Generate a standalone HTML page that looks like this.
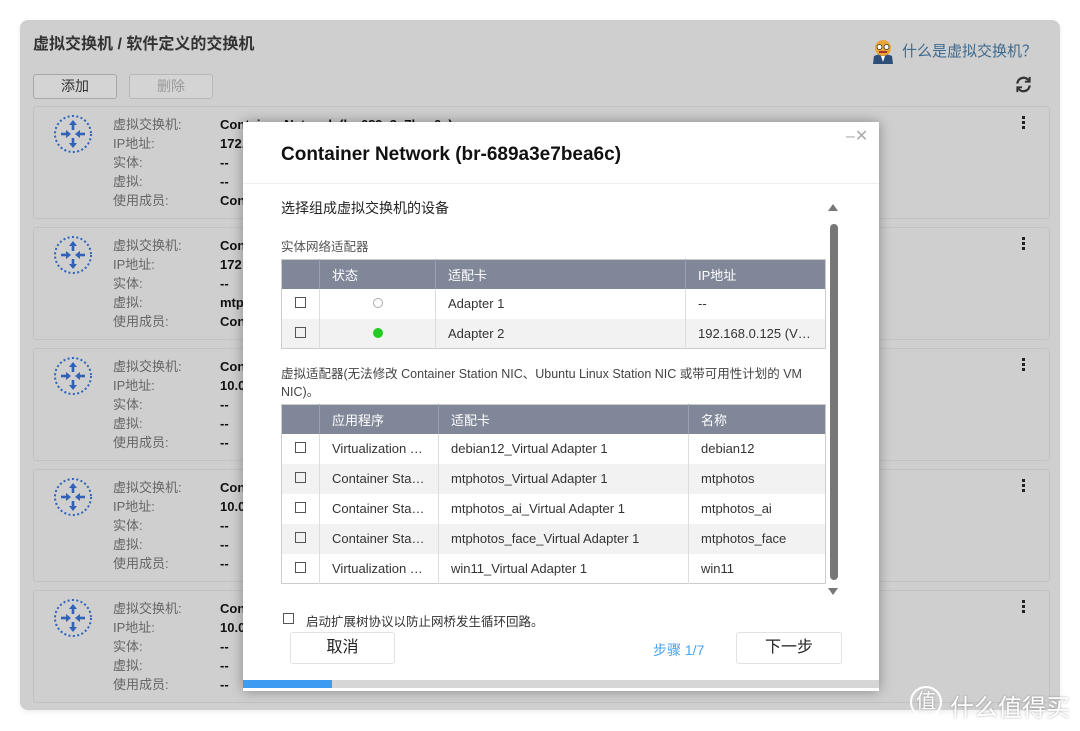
<!DOCTYPE html>
<html><head><meta charset="utf-8"><style>
*{box-sizing:border-box;margin:0;padding:0}
body{width:1080px;height:731px;background:#fff;font-family:"Liberation Sans","Noto Sans CJK SC",sans-serif;position:relative;overflow:hidden;color:#333}
.abs{position:absolute}
.panel{left:20px;top:20px;width:1040px;height:690px;background:#cfcfcf;border-radius:8px;box-shadow:0 2px 6px rgba(0,0,0,.08)}
.btn{position:absolute;height:25px;border:1px solid #a8a8a8;border-radius:3px;background:#d4d4d4;font-size:14px;text-align:center;line-height:23px}
.card{position:absolute;left:33px;width:1017px;height:113px;border:1px solid #c2c2c2;border-radius:3px;background:#cfcfcf}
.lbl{position:absolute;left:80px;font-size:13px;color:#666;line-height:19px}
.val{position:absolute;left:187px;font-size:13px;color:#111;font-weight:bold;line-height:19px}
.kebab{position:absolute;left:989px;top:10px;width:4px}
.kebab i{display:block;width:3px;height:3px;background:#222;margin-bottom:2px}
.modal{left:243px;top:122px;width:636px;height:569px;background:#fff;box-shadow:0 0 12px rgba(0,0,0,.35)}
table{border-collapse:collapse;position:absolute;left:38px;width:545px;font-size:13px;table-layout:fixed}
th{background:#7f8799;color:#fff;font-weight:normal;text-align:left;height:29px;padding-left:12px;border-left:1px solid #9aa1b0}
th:first-child{border-left:none}
td{height:30px;padding-left:12px;border-left:1px solid #ddd;color:#333;white-space:nowrap;overflow:hidden}
table{border:1px solid #ccc}
.cb{display:inline-block;width:11px;height:11px;border:1px solid #555;margin-left:1px}
td:first-child{padding-left:12px;border-left:none}
</style></head><body>
<div class="abs panel"></div>
<div class="abs" style="left:33px;top:30px;font-size:16px;color:#333;font-weight:bold">虚拟交换机 / 软件定义的交换机</div>
<div class="btn" style="left:33px;top:74px;width:84px">添加</div>
<div class="btn" style="left:129px;top:74px;width:84px;color:#999;border-color:#b8b8b8">删除</div>
<svg class="abs" style="left:870px;top:38px" width="26" height="26" viewBox="0 0 26 26"><path d="M3 26 L4 18 Q13 14 22 18 L23 26Z" fill="#2d4e78"/><path d="M11 18 L13 24 L15 18Z" fill="#fff"/><circle cx="13" cy="10" r="8" fill="#e8a636"/><circle cx="9.5" cy="9" r="2.5" fill="#fff" stroke="#333" stroke-width=".8"/><circle cx="16.5" cy="9" r="2.5" fill="#fff" stroke="#333" stroke-width=".8"/><rect x="9" y="13" width="8" height="2" fill="#a33"/></svg>
<div class="abs" style="left:902px;top:40px;font-size:15px;color:#3e6a8e">什么是虚拟交换机？</div>
<svg class="abs" style="left:1014px;top:75px" width="19" height="19" viewBox="0 0 20 20" fill="none" stroke="#333" stroke-width="2.4"><path d="M3.5 9 A6.5 6.5 0 0 1 15.5 6"/><path d="M16.5 11 A6.5 6.5 0 0 1 4.5 14"/><path d="M16.5 2 V7 H11.5" stroke-width="2"/><path d="M3.5 18 V13 H8.5" stroke-width="2"/></svg>

<div class="card" style="top:106px"></div>
<div class="card" style="top:227px"></div>
<div class="card" style="top:348px"></div>
<div class="card" style="top:469px"></div>
<div class="card" style="top:590px"></div>

<div style="position:absolute;left:33px;top:106px;width:1017px;height:113px">
<svg style="position:absolute;left:20px;top:8px" width="40" height="40" viewBox="0 0 40 40"><circle cx="20" cy="20" r="18" fill="none" stroke="#2f62b8" stroke-width="2" stroke-dasharray="2 2.4"/><g stroke="#2f62b8" stroke-width="2.6"><path d="M20 16 V10"/><path d="M20 24 V30"/><path d="M8 20 H15"/><path d="M32 20 H25"/></g><g fill="#2f62b8"><path d="M20 6 L24 11 H16Z"/><path d="M20 34 L24 29 H16Z"/><path d="M18 20 L13 16 V24Z"/><path d="M22 20 L27 16 V24Z"/></g></svg>
<div class="lbl" style="top:9px">虚拟交换机:</div><div class="lbl" style="top:28px">IP地址:</div><div class="lbl" style="top:47px">实体:</div><div class="lbl" style="top:66px">虚拟:</div><div class="lbl" style="top:85px">使用成员:</div>
<div class="val" style="top:9px">Container Network (br-689a3e7bea6c)</div><div class="val" style="top:28px">172.</div><div class="val" style="top:47px">--</div><div class="val" style="top:66px">--</div><div class="val" style="top:85px">Con</div>
<div class="kebab"><i></i><i></i><i></i></div></div>

<div style="position:absolute;left:33px;top:227px;width:1017px;height:113px">
<svg style="position:absolute;left:20px;top:8px" width="40" height="40" viewBox="0 0 40 40"><circle cx="20" cy="20" r="18" fill="none" stroke="#2f62b8" stroke-width="2" stroke-dasharray="2 2.4"/><g stroke="#2f62b8" stroke-width="2.6"><path d="M20 16 V10"/><path d="M20 24 V30"/><path d="M8 20 H15"/><path d="M32 20 H25"/></g><g fill="#2f62b8"><path d="M20 6 L24 11 H16Z"/><path d="M20 34 L24 29 H16Z"/><path d="M18 20 L13 16 V24Z"/><path d="M22 20 L27 16 V24Z"/></g></svg>
<div class="lbl" style="top:9px">虚拟交换机:</div><div class="lbl" style="top:28px">IP地址:</div><div class="lbl" style="top:47px">实体:</div><div class="lbl" style="top:66px">虚拟:</div><div class="lbl" style="top:85px">使用成员:</div>
<div class="val" style="top:9px">Con</div><div class="val" style="top:28px">172</div><div class="val" style="top:47px">--</div><div class="val" style="top:66px">mtp</div><div class="val" style="top:85px">Con</div>
<div class="kebab"><i></i><i></i><i></i></div></div>

<div style="position:absolute;left:33px;top:348px;width:1017px;height:113px">
<svg style="position:absolute;left:20px;top:8px" width="40" height="40" viewBox="0 0 40 40"><circle cx="20" cy="20" r="18" fill="none" stroke="#2f62b8" stroke-width="2" stroke-dasharray="2 2.4"/><g stroke="#2f62b8" stroke-width="2.6"><path d="M20 16 V10"/><path d="M20 24 V30"/><path d="M8 20 H15"/><path d="M32 20 H25"/></g><g fill="#2f62b8"><path d="M20 6 L24 11 H16Z"/><path d="M20 34 L24 29 H16Z"/><path d="M18 20 L13 16 V24Z"/><path d="M22 20 L27 16 V24Z"/></g></svg>
<div class="lbl" style="top:9px">虚拟交换机:</div><div class="lbl" style="top:28px">IP地址:</div><div class="lbl" style="top:47px">实体:</div><div class="lbl" style="top:66px">虚拟:</div><div class="lbl" style="top:85px">使用成员:</div>
<div class="val" style="top:9px">Con</div><div class="val" style="top:28px">10.0</div><div class="val" style="top:47px">--</div><div class="val" style="top:66px">--</div><div class="val" style="top:85px">--</div>
<div class="kebab"><i></i><i></i><i></i></div></div>

<div style="position:absolute;left:33px;top:469px;width:1017px;height:113px">
<svg style="position:absolute;left:20px;top:8px" width="40" height="40" viewBox="0 0 40 40"><circle cx="20" cy="20" r="18" fill="none" stroke="#2f62b8" stroke-width="2" stroke-dasharray="2 2.4"/><g stroke="#2f62b8" stroke-width="2.6"><path d="M20 16 V10"/><path d="M20 24 V30"/><path d="M8 20 H15"/><path d="M32 20 H25"/></g><g fill="#2f62b8"><path d="M20 6 L24 11 H16Z"/><path d="M20 34 L24 29 H16Z"/><path d="M18 20 L13 16 V24Z"/><path d="M22 20 L27 16 V24Z"/></g></svg>
<div class="lbl" style="top:9px">虚拟交换机:</div><div class="lbl" style="top:28px">IP地址:</div><div class="lbl" style="top:47px">实体:</div><div class="lbl" style="top:66px">虚拟:</div><div class="lbl" style="top:85px">使用成员:</div>
<div class="val" style="top:9px">Con</div><div class="val" style="top:28px">10.0</div><div class="val" style="top:47px">--</div><div class="val" style="top:66px">--</div><div class="val" style="top:85px">--</div>
<div class="kebab"><i></i><i></i><i></i></div></div>

<div style="position:absolute;left:33px;top:590px;width:1017px;height:113px">
<svg style="position:absolute;left:20px;top:8px" width="40" height="40" viewBox="0 0 40 40"><circle cx="20" cy="20" r="18" fill="none" stroke="#2f62b8" stroke-width="2" stroke-dasharray="2 2.4"/><g stroke="#2f62b8" stroke-width="2.6"><path d="M20 16 V10"/><path d="M20 24 V30"/><path d="M8 20 H15"/><path d="M32 20 H25"/></g><g fill="#2f62b8"><path d="M20 6 L24 11 H16Z"/><path d="M20 34 L24 29 H16Z"/><path d="M18 20 L13 16 V24Z"/><path d="M22 20 L27 16 V24Z"/></g></svg>
<div class="lbl" style="top:9px">虚拟交换机:</div><div class="lbl" style="top:28px">IP地址:</div><div class="lbl" style="top:47px">实体:</div><div class="lbl" style="top:66px">虚拟:</div><div class="lbl" style="top:85px">使用成员:</div>
<div class="val" style="top:9px">Con</div><div class="val" style="top:28px">10.0</div><div class="val" style="top:47px">--</div><div class="val" style="top:66px">--</div><div class="val" style="top:85px">--</div>
<div class="kebab"><i></i><i></i><i></i></div></div>

<div class="abs modal">
  <div class="abs" style="left:603px;top:4px;font-size:16px;color:#aaa">–✕</div>
  <div class="abs" style="left:38px;top:22px;font-size:19px;font-weight:bold;color:#111">Container Network (br-689a3e7bea6c)</div>
  <div class="abs" style="left:0;top:61px;width:636px;height:1px;background:#eee"></div>
  <div class="abs" style="left:38px;top:76px;font-size:14px;color:#222">选择组成虚拟交换机的设备</div>
  <div class="abs" style="left:585px;top:82px;width:0;height:0;border-left:5px solid transparent;border-right:5px solid transparent;border-bottom:7px solid #777"></div>
  <div class="abs" style="left:587px;top:102px;width:8px;height:356px;background:#777;border-radius:4px"></div>
  <div class="abs" style="left:585px;top:466px;width:0;height:0;border-left:5px solid transparent;border-right:5px solid transparent;border-top:7px solid #777"></div>
  <div class="abs" style="left:38px;top:114px;font-size:12.5px;color:#555">实体网络适配器</div>
  <table style="top:137px">
    <colgroup><col style="width:38px"><col style="width:116px"><col style="width:250px"><col></colgroup>
    <tr><th></th><th>状态</th><th>适配卡</th><th>IP地址</th></tr>
    <tr><td style="background:#fff"><span class="cb"></span></td><td style="background:#fff;text-align:center;padding:0"><span style="display:inline-block;width:10px;height:10px;border:1px solid #aaa;border-radius:50%"></span></td><td style="background:#fff">Adapter 1</td><td style="background:#fff">--</td></tr>
    <tr><td style="background:#f2f2f2"><span class="cb"></span></td><td style="background:#f2f2f2;text-align:center;padding:0"><span style="display:inline-block;width:10px;height:10px;background:#22cc22;border-radius:50%"></span></td><td style="background:#f2f2f2">Adapter 2</td><td style="background:#f2f2f2">192.168.0.125 (V…</td></tr>
  </table>
  <div class="abs" style="left:38px;top:243px;width:545px;font-size:12.5px;color:#444;line-height:18px">虚拟适配器(无法修改 Container Station NIC、Ubuntu Linux Station NIC 或带可用性计划的 VM NIC)。</div>
  <table style="top:282px">
    <colgroup><col style="width:38px"><col style="width:119px"><col style="width:250px"><col></colgroup>
    <tr><th></th><th>应用程序</th><th>适配卡</th><th>名称</th></tr>
    <tr><td style="background:#fff"><span class="cb"></span></td><td style="background:#fff">Virtualization …</td><td style="background:#fff">debian12_Virtual Adapter 1</td><td style="background:#fff">debian12</td></tr>
    <tr><td style="background:#f2f2f2"><span class="cb"></span></td><td style="background:#f2f2f2">Container Sta…</td><td style="background:#f2f2f2">mtphotos_Virtual Adapter 1</td><td style="background:#f2f2f2">mtphotos</td></tr>
    <tr><td style="background:#fff"><span class="cb"></span></td><td style="background:#fff">Container Sta…</td><td style="background:#fff">mtphotos_ai_Virtual Adapter 1</td><td style="background:#fff">mtphotos_ai</td></tr>
    <tr><td style="background:#f2f2f2"><span class="cb"></span></td><td style="background:#f2f2f2">Container Sta…</td><td style="background:#f2f2f2">mtphotos_face_Virtual Adapter 1</td><td style="background:#f2f2f2">mtphotos_face</td></tr>
    <tr><td style="background:#fff"><span class="cb"></span></td><td style="background:#fff">Virtualization …</td><td style="background:#fff">win11_Virtual Adapter 1</td><td style="background:#fff">win11</td></tr>
  </table>
  <span class="cb abs" style="left:39px;top:491px"></span>
  <div class="abs" style="left:63px;top:489px;font-size:12.5px;color:#333">启动扩展树协议以防止网桥发生循环回路。</div>
  <div class="abs" style="left:47px;top:510px;width:105px;height:32px;border:1px solid #e2e2e2;border-radius:3px;text-align:center;line-height:30px;font-size:16px;color:#222">取消</div>
  <div class="abs" style="left:410px;top:518px;font-size:14px;color:#4aa3f0">步骤 1/7</div>
  <div class="abs" style="left:493px;top:510px;width:106px;height:32px;border:1px solid #e2e2e2;border-radius:3px;text-align:center;line-height:30px;font-size:16px;color:#222">下一步</div>
  <div class="abs" style="left:0;top:558px;width:636px;height:8px;background:#d6d6d6"></div>
  <div class="abs" style="left:0;top:558px;width:89px;height:8px;background:#3d9cf0"></div>
</div>
<div class="abs" style="left:910px;top:686px;width:32px;height:32px;border:2px solid #fff;border-radius:50%;color:#fff;font-size:20px;text-align:center;line-height:28px;text-shadow:0 0 2px rgba(0,0,0,.3)">值</div>
<div class="abs" style="left:950px;top:688px;font-size:24px;color:#fff;text-shadow:0 0 2px rgba(0,0,0,.35)">什么值得买</div>
</body></html>
